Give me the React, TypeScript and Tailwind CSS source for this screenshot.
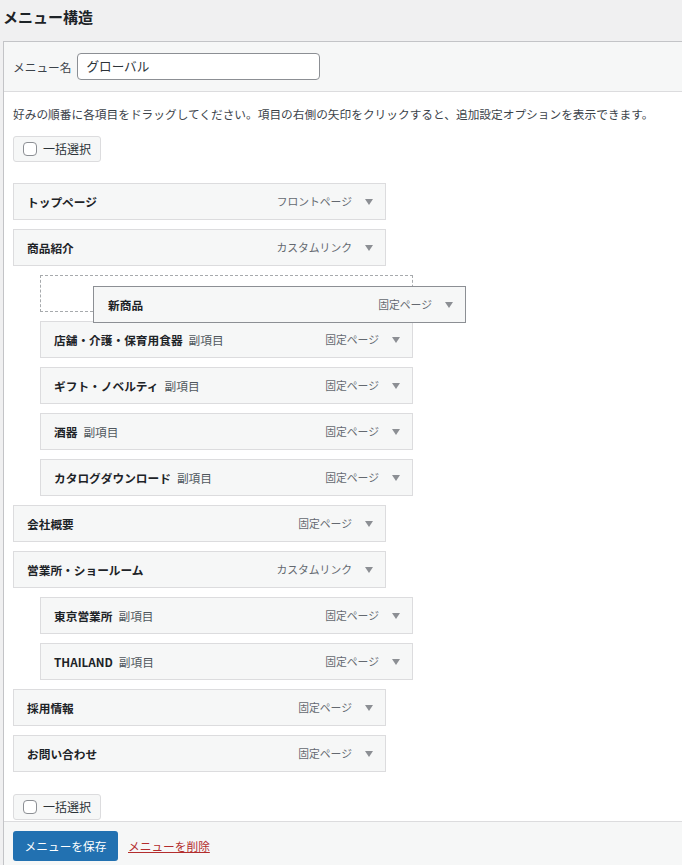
import React from "react";

const font = { fontFamily: '"Noto Sans CJK JP", "Noto Sans", sans-serif' };

function Arrow() {
  return (
    <svg width="8" height="6" viewBox="0 0 8 6" className="shrink-0">
      <path d="M0 0 L8 0 L4 6 Z" fill="#8c8f94" />
    </svg>
  );
}

function Item({ title, type, sub, child }: { title: string; type: string; sub?: boolean; child?: boolean }) {
  return (
    <div className={`${child ? "ml-[27px]" : ""} mb-[9px] flex h-[37px] w-[373px] items-center border border-[#dcdcde] bg-[#f6f7f7] pl-[13px] pr-[12px]`}>
      <span className="text-[11.7px] font-semibold text-[#1d2327]">{title}</span>
      {sub && <span className="ml-[6px] text-[11.7px] text-[#50575e]">副項目</span>}
      <span className="ml-auto mr-[13px] text-[10.8px] text-[#646970]">{type}</span>
      <Arrow />
    </div>
  );
}

function BulkSelect() {
  return (
    <div className="flex h-[26px] w-[88px] items-center gap-[6px] rounded-[3px] border border-[#dcdcde] bg-[#f6f7f7] pl-[9px]">
      <span className="h-[14px] w-[14px] rounded-[4px] border border-[#8c8f94] bg-white" />
      <span className="text-[12px] text-[#2c3338]">一括選択</span>
    </div>
  );
}

export default function App() {
  return (
    <div className="h-[865px] w-[682px] overflow-hidden bg-[#f0f0f1]" style={font}>
      <div className="flex h-[41px] items-center pl-[3px] pb-[7px]">
        <h2 className="text-[15px] font-bold text-[#1d2327]">メニュー構造</h2>
      </div>
      <div className="ml-[3px] border-l border-t border-[#c3c4c7] bg-white">
        <div className="flex h-[50px] items-center border-b border-[#dcdcde] bg-[#f6f7f7] pl-[9px]">
          <span className="text-[11.7px] text-[#3c434a]">メニュー名</span>
          <div className="ml-[6px] flex h-[27px] w-[243px] items-center rounded-[4px] border border-[#8c8f94] bg-white pl-[8px] text-[12.6px] text-[#2c3338]">
            グローバル
          </div>
        </div>
        <div className="relative flex flex-col items-start pl-[9px] pt-[13px]">
          <p className="whitespace-nowrap text-[11.7px] leading-[18px] text-[#3c434a]">
            好みの順番に各項目をドラッグしてください。項目の右側の矢印をクリックすると、追加設定オプションを表示できます。
          </p>
          <div className="mt-[13px]">
            <BulkSelect />
          </div>
          <div className="mt-[21px]">
            <Item title="トップページ" type="フロントページ" />
            <Item title="商品紹介" type="カスタムリンク" />
            <div className="mb-[9px] ml-[27px] h-[37px] w-[373px] border border-dashed border-[#a7aaad]" />
            <Item title="店舗・介護・保育用食器" type="固定ページ" sub child />
            <Item title="ギフト・ノベルティ" type="固定ページ" sub child />
            <Item title="酒器" type="固定ページ" sub child />
            <Item title="カタログダウンロード" type="固定ページ" sub child />
            <Item title="会社概要" type="固定ページ" />
            <Item title="営業所・ショールーム" type="カスタムリンク" />
            <Item title="東京営業所" type="固定ページ" sub child />
            <Item title="THAILAND" type="固定ページ" sub child />
            <Item title="採用情報" type="固定ページ" />
            <Item title="お問い合わせ" type="固定ページ" />
          </div>
          <div className="absolute left-[89px] top-[194px] flex h-[37px] w-[373px] items-center border border-[#8c8f94] bg-[#f6f7f7] pl-[14px] pr-[12px]">
            <span className="text-[11.7px] font-semibold text-[#1d2327]">新商品</span>
            <span className="ml-auto mr-[13px] text-[10.8px] text-[#646970]">固定ページ</span>
            <Arrow />
          </div>
          <div className="mt-[13px] pb-[1px]">
            <BulkSelect />
          </div>
        </div>
        <div className="flex h-[60px] items-start gap-[10px] border-t border-[#dcdcde] bg-[#f6f7f7] pl-[9px] pt-[9px]">
          <div className="flex h-[30px] w-[105px] items-center justify-center rounded-[3px] bg-[#2271b1] text-[11.7px] text-white">
            メニューを保存
          </div>
          <span className="mt-[6px] text-[11.7px] text-[#b32d2e] underline">メニューを削除</span>
        </div>
      </div>
    </div>
  );
}
